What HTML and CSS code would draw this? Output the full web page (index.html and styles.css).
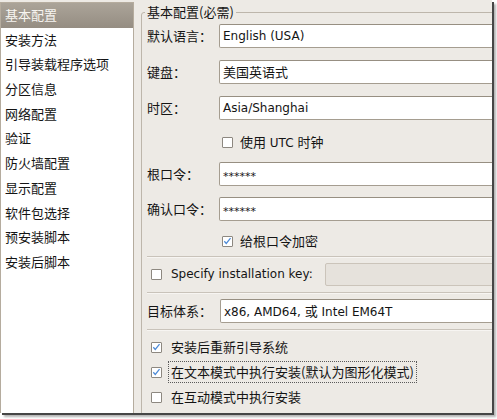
FILE: index.html
```html
<!DOCTYPE html>
<html lang="zh-CN">
<head>
<meta charset="utf-8">
<title>Kickstart</title>
<link rel="stylesheet" href="styles.css">
</head>
<body>
<div class="win">
  <ul class="list">
    <li class="sel">基本配置</li>
    <li>安装方法</li>
    <li>引导装载程序选项</li>
    <li>分区信息</li>
    <li>网络配置</li>
    <li>验证</li>
    <li>防火墙配置</li>
    <li>显示配置</li>
    <li>软件包选择</li>
    <li>预安装脚本</li>
    <li>安装后脚本</li>
  </ul>
  <fieldset class="frame">
    <legend class="legend">基本配置(必需)</legend>
    <div class="form">
      <div class="row erow m4"><span class="lbl">默认语言<span class="colon">：</span></span><span class="entry">English (USA)</span></div>
      <div class="row erow m12"><span class="lbl">键盘<span class="colon">：</span></span><span class="entry"><span class="cjk">美国英语式</span></span></div>
      <div class="row erow m12"><span class="lbl">时区<span class="colon">：</span></span><span class="entry">Asia/Shanghai</span></div>
      <div class="row crow m12 up"><span class="cb"></span><span class="ctext"><span class="cjk">使用</span> UTC <span class="cjk">时钟</span></span></div>
      <div class="row erow m10"><span class="lbl">根口令<span class="colon">：</span></span><span class="entry"><span class="pw">******</span></span></div>
      <div class="row erow m11"><span class="lbl">确认口令<span class="colon">：</span></span><span class="entry"><span class="pw">******</span></span></div>
      <div class="row crow m10 up"><span class="cb on"><svg viewBox="0 0 11 11" width="9" height="9"><path d="M1.6 5.2 L4 7.9 L9.2 1.4" fill="none" stroke="#4d8ad6" stroke-width="1.5"/></svg></span><span class="ctext cjk">给根口令加密</span></div>
      <div class="sep m5"></div>
      <div class="row krow m4">
        <span class="keylbl"><span class="cb lo"></span>Specify installation key:</span>
        <span class="entry dis"></span>
      </div>
      <div class="sep m6"></div>
      <div class="row erow m5"><span class="lbl wide">目标体系<span class="colon">：</span></span><span class="entry">x86, AMD64, <span class="cjk">或</span> Intel EM64T</span></div>
      <div class="sep m6"></div>
      <div class="row crow m6 low"><span class="cb on lo"><svg viewBox="0 0 11 11" width="9" height="9"><path d="M1.6 5.2 L4 7.9 L9.2 1.4" fill="none" stroke="#4d8ad6" stroke-width="1.5"/></svg></span><span class="ctext cjk">安装后重新引导系统</span></div>
      <div class="row frow m4 low"><span class="cb on lf"><svg viewBox="0 0 11 11" width="9" height="9"><path d="M1.6 5.2 L4 7.9 L9.2 1.4" fill="none" stroke="#4d8ad6" stroke-width="1.5"/></svg></span><span class="focus cjk">在文本模式中执行安装(默认为图形化模式)</span></div>
      <div class="row crow m4 low"><span class="cb lo"></span><span class="ctext cjk">在互动模式中执行安装</span></div>
    </div>
  </fieldset>
</div>
</body>
</html>
```
FILE: styles.css
```css
html, body {
  margin: 0;
  padding: 0;
}
body {
  width: 497px;
  height: 419px;
  overflow: hidden;
  background: #ffffff;
  font-family: "DejaVu Sans", "Noto Sans CJK SC", sans-serif;
  font-size: 12px;
  color: #141414;
}
.win {
  width: 492px;
  height: 413px;
  background: #edeae5;
  display: flex;
  align-items: flex-start;
  overflow: hidden;
  box-shadow: 2px 2px 0 #464646, 4px 4px 2px rgba(0, 0, 0, 0.3);
}
.list {
  flex: none;
  width: 134px;
  height: 411px;
  box-sizing: border-box;
  margin: 2px 0 0 0;
  padding: 0;
  list-style: none;
  background: #ffffff;
  border: 1px solid #b5ac9e;
  border-bottom: 0;
  font-family: "Noto Sans CJK SC", sans-serif;
  font-size: 13px;
}
.list li {
  height: 24.7px;
  line-height: 24.7px;
  padding-left: 4px;
  white-space: nowrap;
}
.list li.sel {
  background: linear-gradient(#aba499, #958d82);
  color: #f7f5f1;
}
.frame {
  flex: none;
  width: 420px;
  height: 440px;
  box-sizing: border-box;
  margin: 4px 0 0 7px;
  padding: 0 0 0 3px;
  border: 1px solid #bdb6ab;
  border-radius: 3px;
  min-width: 0;
}
.legend {
  padding: 0 2px;
  font-family: "Noto Sans CJK SC", sans-serif;
  font-size: 13px;
  line-height: 16px;
}
.form {
  padding-left: 2px;
  display: flex;
  flex-direction: column;
}
.row {
  display: flex;
  align-items: center;
  line-height: 16px;
  white-space: nowrap;
}
.erow { height: 24px; }
.crow { height: 20px; }
.krow { height: 24px; }
.frow { height: 22px; }
.m4 { margin-top: 4px; }
.m5 { margin-top: 5px; }
.m6 { margin-top: 6px; }
.m10 { margin-top: 10px; }
.m11 { margin-top: 11px; }
.m12 { margin-top: 12px; }
.cjk {
  font-family: "Noto Sans CJK SC", sans-serif;
  font-size: 13px;
}
.lbl {
  flex: none;
  width: 72px;
  font-family: "Noto Sans CJK SC", sans-serif;
  font-size: 13px;
}
.lbl.wide { width: 73px; }
.colon {
  font-family: "Noto Sans CJK TC", "Noto Sans CJK SC", sans-serif;
}
.entry {
  flex: 1;
  height: 24px;
  box-sizing: border-box;
  border: 1px solid #a59d90;
  border-top-color: #978f82;
  border-radius: 2px;
  background: #ffffff;
  padding: 0 3px;
  line-height: 22px;
  white-space: nowrap;
  overflow: hidden;
}
.entry.dis {
  height: 23px;
  background: #e6e2dc;
  border-color: #cbc4ba;
}
.pw {
  font-size: 11px;
  vertical-align: -2px;
}
.up { padding-left: 75px; }
.low { padding-left: 4px; }
.cb {
  flex: none;
  width: 11px;
  height: 11px;
  box-sizing: border-box;
  border: 1px solid #8d8880;
  border-radius: 1px;
  background: #ffffff;
  margin-right: 7px;
  display: flex;
  align-items: center;
  justify-content: center;
}
.cb.lo { margin-right: 9px; }
.cb.lf { margin-right: 6px; }
.keylbl {
  flex: none;
  width: 178px;
  display: flex;
  align-items: center;
  padding-left: 4px;
  box-sizing: border-box;
}
.sep {
  height: 2px;
  box-sizing: border-box;
  border-top: 1px solid #c9c3ba;
  border-bottom: 1px solid #f7f5f2;
}
.focus {
  height: 22px;
  box-sizing: border-box;
  border: 1px dotted #5a5a5a;
  padding: 0 2px;
  line-height: 20px;
}
```
